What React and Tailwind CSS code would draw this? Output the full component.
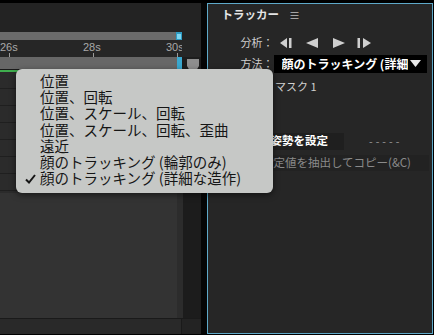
import React from 'react'

const menuItems = [
  '位置',
  '位置、回転',
  '位置、スケール、回転',
  '位置、スケール、回転、歪曲',
  '遠近',
  '顔のトラッキング (輪郭のみ)',
  '顔のトラッキング (詳細な造作)',
]

const StepBack = () => (
  <svg width="13" height="10" viewBox="0 0 13 10">
    <polygon points="0,5 7,0 7,10" fill="#cfcfcf" />
    <rect x="9" y="0" width="2.5" height="10" fill="#cfcfcf" />
  </svg>
)
const Back = () => (
  <svg width="12" height="10" viewBox="0 0 12 10">
    <polygon points="0,5 12,0 12,10" fill="#cfcfcf" />
  </svg>
)
const Fwd = () => (
  <svg width="12" height="10" viewBox="0 0 12 10">
    <polygon points="12,5 0,0 0,10" fill="#cfcfcf" />
  </svg>
)
const StepFwd = () => (
  <svg width="15" height="10" viewBox="0 0 15 10">
    <rect x="1.5" y="0" width="2.5" height="10" fill="#cfcfcf" />
    <polygon points="15,5 7,0 7,10" fill="#cfcfcf" />
  </svg>
)

const Timeline = () => (
  <div className="w-[201px] flex flex-col bg-[#232323]">
    {/* top empty */}
    <div className="h-[29px] bg-[#232323]" />
    {/* navigator */}
    <div className="h-[8px] flex">
      <div className="w-[176px] bg-[#6b6b6b]" />
      <div className="w-[6px] bg-[#2f9cc4] flex items-center justify-center">
        <div className="w-[4px] h-[5px] bg-[#7fd6f0]" />
      </div>
      <div className="flex-1 bg-[#232323]" />
    </div>
    {/* ruler */}
    <div className="h-[17px] relative bg-[#262626] text-[11px] leading-[14px] text-[#a9a9a9] font-['Liberation_Sans',sans-serif]">
      <span className="absolute left-[0px] top-[0px]">26s</span>
      <span className="absolute left-[83px] top-[0px]">28s</span>
      <div className="absolute left-[166px] top-[0px] w-[16px] overflow-hidden whitespace-nowrap">30s</div>
      <div className="absolute left-[9px] top-[13px] w-px h-[4px] bg-[#9a9a9a]" />
      <div className="absolute left-[93px] top-[13px] w-px h-[4px] bg-[#9a9a9a]" />
      <div className="absolute left-[177px] top-[13px] w-px h-[4px] bg-[#9a9a9a]" />
    </div>
    {/* work area */}
    <div className="h-[12px] flex">
      <div className="w-[177px] bg-[#676767]" />
      <div className="w-[5px] bg-[#3aa8cf]" />
      <div className="flex-1 bg-[#1d1d1d] pl-[5px] pt-[2px]">
        <svg width="12" height="12" viewBox="0 0 12 12">
          <path d="M0,0 H12 V7 L9,12 H3 L0,7 Z" fill="#8e8e8e" />
        </svg>
      </div>
    </div>
    <div className="h-px bg-[#1a1a1a]" />
    <div className="h-[2px] flex">
      <div className="w-[177px] bg-[#3fae4e]" />
      <div className="w-[5px] bg-[#3aa8cf]" />
      <div className="flex-1 bg-[#1d1d1d]" />
    </div>
    {/* tracks */}
    <div className="h-[121px] flex">
      <div className="w-[183px] flex flex-col bg-[#2b2b2b]">
        {[0, 1, 2, 3, 4, 5, 6].map(i => (
          <div key={i} className="h-[17px] border-b border-[#1f1f1f]" />
        ))}
      </div>
      <div className="flex-1 bg-[#1c1c1c]" />
    </div>
    {/* empty lower area */}
    <div className="flex-1 flex">
      <div className="w-[177px] bg-[#333333]" />
      <div className="w-[6px] bg-[#2c2c2c]" />
      <div className="flex-1 bg-[#1c1c1c]" />
    </div>
    {/* bottom bar */}
    <div className="h-[16px] flex border-t border-[#1a1a1a]">
      <div className="w-[182px] bg-[#292929] border-r border-[#1a1a1a]" />
      <div className="flex-1 bg-[#232323]" />
    </div>
  </div>
)

const Tracker = () => (
  <div className="w-[226px] border-[1.5px] border-[#5ea9c9] bg-[#262626] flex flex-col text-[#d8d8d8] font-['Noto_Sans_CJK_JP',sans-serif]">
    <div className="h-[22px] flex items-center pl-[13.5px] gap-[10px]">
      <span className="text-[11.5px] font-bold text-[#e4e4e4]">トラッカー</span>
      <span className="text-[11px] text-[#bdbdbd]">≡</span>
    </div>
    <div className="mt-[8.5px] h-[16px] flex items-center">
      <span className="w-[65.5px] text-right text-[11px] text-[#cfcfcf]">分析：</span>
      <div className="flex items-center ml-[6px]">
        <StepBack />
        <div className="ml-[13px]"><Back /></div>
        <div className="ml-[15px]"><Fwd /></div>
        <div className="ml-[11px]"><StepFwd /></div>
      </div>
    </div>
    <div className="mt-[4px] h-[18px] flex items-center">
      <span className="w-[65.5px] text-right text-[11px] text-[#cfcfcf]">方法：</span>
      <div className="w-[153px] h-full bg-black flex items-center pl-[8px] pr-[6px]">
        <span className="flex-1 text-[12px] font-bold text-white whitespace-nowrap overflow-hidden">顔のトラッキング (詳細</span>
        <svg width="11" height="7" viewBox="0 0 11 7" className="ml-[2px]">
          <polygon points="0,0 11,0 5.5,7" fill="#e8e8e8" />
        </svg>
      </div>
    </div>
    <div className="mt-[6px] h-[16px] flex items-center pl-[67px] text-[11px] text-[#cfcfcf]">
      マスク 1
    </div>
    <div className="mt-[38px] h-[17px] flex items-center">
      <div className="ml-[30px] w-[106px] h-full bg-[#1f1f1f] flex items-center justify-end pr-[16px]">
        <span className="text-[11.5px] font-bold text-white whitespace-nowrap">初期姿勢を設定</span>
      </div>
      <span className="ml-[25px] text-[11px] text-[#8c8c8c] font-['Liberation_Sans',sans-serif] tracking-[3px]">-----</span>
    </div>
    <div className="mt-[5px] h-[16px] flex items-center">
      <div className="ml-[40px] w-[181px] h-full bg-[#222222] flex items-center justify-end pr-[18px]">
        <span className="text-[11.5px] text-[#8a8a8a] whitespace-nowrap">設定値を抽出してコピー(&amp;C)</span>
      </div>
    </div>
  </div>
)

export default function App() {
  return (
    <div className="w-[434px] h-[335px] bg-black relative overflow-hidden">
      <div className="flex h-full pt-[3px] pb-[1px]">
        <Timeline />
        <div className="w-[6px] bg-[#050505]" />
        <Tracker />
      </div>

      {/* dropdown menu */}
      <div className="absolute left-[16px] top-[69px] w-[257px] h-[124px] rounded-[6px] bg-[#c6c8c6] shadow-[0_2px_6px_rgba(0,0,0,0.5)] pt-[4px] font-['Noto_Sans_CJK_JP',sans-serif] text-[14.5px] leading-[16.2px] text-[#151515]">
        {menuItems.map((item, i) => (
          <div key={i} className="h-[16.2px] flex items-center relative pl-[24px] whitespace-nowrap">
            {i === menuItems.length - 1 && (
              <svg width="11" height="10" viewBox="0 0 11 10" className="absolute left-[9px] top-[4px]">
                <path d="M1,5.5 L4,8.5 L10,1" stroke="#151515" strokeWidth="2" fill="none" />
              </svg>
            )}
            {item}
          </div>
        ))}
      </div>
    </div>
  )
}
